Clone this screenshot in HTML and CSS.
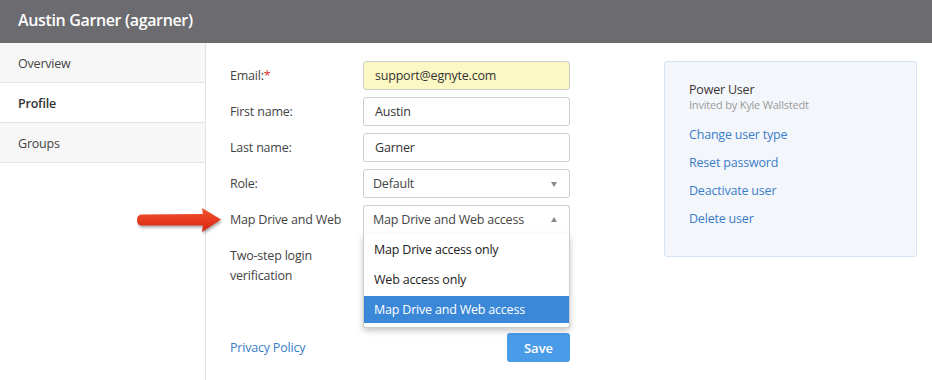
FILE: index.html
```html
<!DOCTYPE html>
<html>
<head>
    <link rel="stylesheet" href="styles.css">
</head>

<body>
    <div class="topbar">
        <h1 class="title">Austin Garner (agarner)</h1>
    </div>

    <div class="main">
        <div class="sidebar">
            <div class="nav-item">Overview</div>
            <div class="nav-item active">Profile</div>
            <div class="nav-item">Groups</div>
        </div>

        <div class="content">
            <div class="form">
                <div class="row">
                    <label>Email:<span class="req">*</span></label>
                    <div class="field email">support@egnyte.com</div>
                </div>
                <div class="row">
                    <label>First name:</label>
                    <div class="field">Austin</div>
                </div>
                <div class="row">
                    <label>Last name:</label>
                    <div class="field">Garner</div>
                </div>
                <div class="row">
                    <label>Role:</label>
                    <div class="field select">Default<span class="caret down"></span></div>
                </div>
                <div class="row">
                    <label>Map Drive and Web</label>
                    <div class="combo">
                        <div class="field select open">Map Drive and Web access<span class="caret up"></span></div>
                        <ul class="menu">
                            <li>Map Drive access only</li>
                            <li>Web access only</li>
                            <li class="selected">Map Drive and Web access</li>
                        </ul>
                    </div>
                </div>
                <div class="row tall">
                    <label>Two-step login<br>verification</label>
                </div>
                <div class="footer">
                    <a class="link">Privacy Policy</a>
                    <button class="save">Save</button>
                </div>
            </div>

            <div class="panel">
                <div class="user-type">Power User</div>
                <div class="invited">Invited by Kyle Wallstedt</div>
                <ul class="actions">
                    <li><a class="link">Change user type</a></li>
                    <li><a class="link">Reset password</a></li>
                    <li><a class="link">Deactivate user</a></li>
                    <li><a class="link">Delete user</a></li>
                </ul>
            </div>
        </div>
    </div>

    <!-- annotation arrow -->
    <svg class="arrow" width="92" height="34" viewBox="0 0 92 34">
        <defs>
            <linearGradient id="red" x1="0" y1="0" x2="0" y2="1">
                <stop offset="0" stop-color="#f2552f"/>
                <stop offset="1" stop-color="#d8200f"/>
            </linearGradient>
        </defs>
        <path d="M8 9.5 L69 9 L68 3 L87 14.5 L68 27 L69 20.5 L8 20.5 Q3 20.5 3 15 Q3 9.5 8 9.5 Z" fill="url(#red)"/>
    </svg>
</body>
</html>
```

FILE: styles.css
```css
body {
    margin: 0;
    font-family: "Open Sans", "Liberation Sans", sans-serif;
    font-size: 12.5px;
    letter-spacing: -0.2px;
    color: #444;
    background: #fff;
    height: 380px;
    overflow: hidden;
}

.topbar {
    height: 43px;
    background: #6b6b70;
    display: flex;
    align-items: center;
    padding: 0 18px 3px;
    box-sizing: border-box;
}

.title {
    margin: 0;
    font-size: 16px;
    font-weight: 600;
    letter-spacing: -0.35px;
    color: #fff;
}

.main {
    display: flex;
    height: 337px;
}

.sidebar {
    width: 205px;
    border-right: 1px solid #e3e3e3;
}

.nav-item {
    height: 39px;
    line-height: 41px;
    padding-left: 18px;
    background: #f7f7f7;
    border-bottom: 1px solid #e3e3e3;
}

.nav-item.active {
    background: #fff;
    font-weight: 600;
    color: #333;
}

.content {
    display: flex;
    padding: 18px 0 0 24px;
    gap: 94px;
}

.form {
    width: 340px;
    display: flex;
    flex-direction: column;
    gap: 7px;
}

.row {
    display: flex;
    align-items: center;
    height: 29px;
}

.row label {
    width: 133px;
    flex-shrink: 0;
}

.row.tall {
    height: 50px;
    align-items: flex-start;
    padding-top: 5px;
    line-height: 20px;
}

.req {
    color: #e0342c;
}

.field {
    width: 207px;
    height: 29px;
    box-sizing: border-box;
    border: 1px solid #cdcdcd;
    border-radius: 3px;
    padding-left: 11px;
    line-height: 27px;
    color: #333;
    background: #fff;
    position: relative;
}

.field.email {
    background: #fcf8c4;
}

.field.select {
    padding-left: 9px;
    color: #444;
}

.caret {
    position: absolute;
    right: 12px;
    top: 12px;
    width: 0;
    height: 0;
    border-left: 3.5px solid transparent;
    border-right: 3.5px solid transparent;
}

.caret.down {
    border-top: 5px solid #8a8a8a;
}

.caret.up {
    border-bottom: 5px solid #8a8a8a;
    top: 11px;
}

.combo {
    position: relative;
}

.field.open {
    border-bottom: none;
    border-radius: 3px 3px 0 0;
}

.menu {
    position: absolute;
    top: 100%;
    left: 0;
    width: 207px;
    box-sizing: border-box;
    margin: 0;
    padding: 1px 0 4px;
    list-style: none;
    background: #fff;
    border: 1px solid #cdcdcd;
    border-top: none;
    border-radius: 0 0 3px 3px;
    box-shadow: 0 3px 6px rgba(0, 0, 0, 0.22);
    z-index: 10;
}

.menu li {
    height: 30px;
    line-height: 30px;
    padding-left: 10px;
    color: #222;
}

.menu li.selected {
    height: 27px;
    line-height: 27px;
    margin-top: 1px;
    background: #3b88d8;
    color: #fff;
}

.footer {
    display: flex;
    justify-content: space-between;
    align-items: center;
    margin-top: 30px;
    width: 340px;
}

.link {
    color: #3b7dc8;
    text-decoration: none;
}

.save {
    width: 63px;
    height: 29px;
    border: none;
    border-radius: 3px;
    background: #4a9be8;
    color: #fff;
    font-family: inherit;
    font-size: 13px;
    font-weight: 600;
}

.panel {
    width: 253px;
    height: 196px;
    box-sizing: border-box;
    background: #f3f6fb;
    border: 1px solid #d5e3f2;
    border-radius: 3px;
    padding: 19px 24px;
}

.user-type {
    font-size: 12.5px;
    color: #3a3533;
    line-height: 17px;
}

.invited {
    font-size: 11px;
    color: #9a9a9a;
    line-height: 13px;
}

.actions {
    list-style: none;
    margin: 14px 0 0;
    padding: 0;
}

.actions li {
    height: 28px;
    line-height: 20px;
}

.arrow {
    position: absolute;
    left: 134px;
    top: 205px;
    filter: drop-shadow(1px 2px 1.5px rgba(0, 0, 0, 0.35));
}
```
